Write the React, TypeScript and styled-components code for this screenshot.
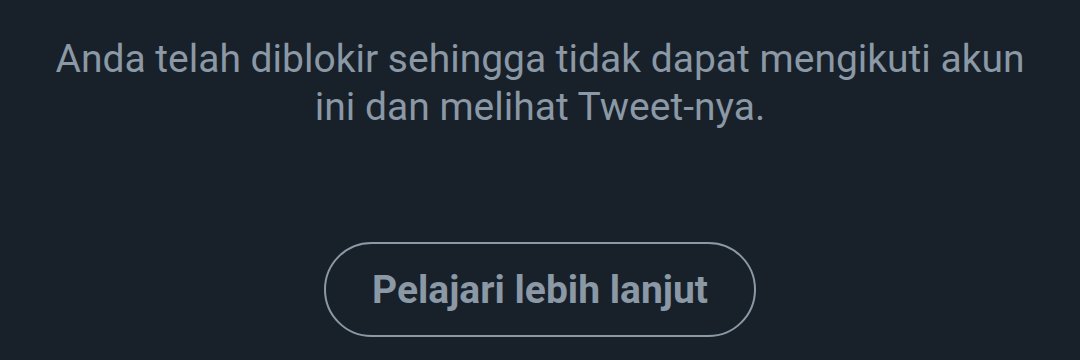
import styled, { createGlobalStyle } from 'styled-components';

const GlobalStyle = createGlobalStyle`
  html, body {
    margin: 0;
    padding: 0;
    background: #18202a;
  }
`;

const Page = styled.div`
  width: 1080px;
  height: 360px;
  background: #18202a;
  display: flex;
  flex-direction: column;
  align-items: center;
  padding-top: 35px;
  box-sizing: border-box;
  font-family: Roboto, "Liberation Sans", sans-serif;
  color: #8b98a5;
`;

const Message = styled.p`
  margin: 0;
  width: 990px;
  text-align: center;
  font-size: 39px;
  line-height: 48px;
`;

const OutlineButton = styled.button`
  margin-top: 111px;
  width: 432px;
  height: 95px;
  border: 2px solid #8b98a5;
  border-radius: 48px;
  background: transparent;
  color: #8b98a5;
  font-family: inherit;
  font-size: 39px;
  font-weight: 700;
  cursor: pointer;
`;

const App = () => {
  return (
    <Page>
      <GlobalStyle />
      <Message>
        Anda telah diblokir sehingga tidak dapat mengikuti akun ini dan melihat Tweet-nya.
      </Message>
      <OutlineButton>Pelajari lebih lanjut</OutlineButton>
    </Page>
  );
};

export default App;
